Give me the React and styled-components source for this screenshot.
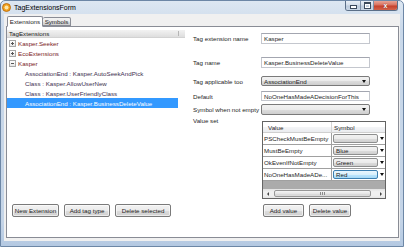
import React from 'react';
import styled, { createGlobalStyle, css } from 'styled-components';

const GlobalStyle = createGlobalStyle`
  html, body {
    margin: 0;
    padding: 0;
  }
  body {
    font-family: 'Liberation Sans', Arial, sans-serif;
    font-size: 6.2px;
    color: #1e1e1e;
  }
  * {
    box-sizing: border-box;
  }
`;

const Window = styled.div`
  width: 404px;
  height: 247px;
  display: flex;
  flex-direction: column;
  background: linear-gradient(180deg, #dde7f2 0%, #cad9ea 12%, #c4d4e7 90%, #b4c9e2 100%);
  border: 1px solid #6d87a6;
  border-radius: 5px 5px 0 0;
  overflow: hidden;
`;

const TitleBar = styled.div`
  height: 13px;
  flex-shrink: 0;
  display: flex;
  align-items: flex-start;
  padding-left: 1px;
  padding-right: 5px;
`;

const AppIcon = styled.svg`
  width: 9px;
  height: 9px;
  margin-top: 2px;
  flex-shrink: 0;
`;

const Title = styled.span`
  margin-left: 3px;
  font-size: 7px;
  line-height: 13px;
  color: #000;
`;

const CaptionGroup = styled.div`
  margin-left: auto;
  display: flex;
  height: 10px;
  border: 1px solid #5b6f88;
  border-top: none;
  border-radius: 0 0 3px 3px;
  overflow: hidden;
`;

const CaptionButton = styled.div`
  width: ${p => p.$w}px;
  height: 100%;
  display: flex;
  align-items: center;
  justify-content: center;
  background: ${p =>
    p.$close
      ? 'linear-gradient(180deg, #e8a597 0%, #d9715f 45%, #c6402b 55%, #d2634b 100%)'
      : 'linear-gradient(180deg, #e9eff6 0%, #d3dde9 45%, #bccbdc 55%, #c9d6e5 100%)'};
  & + & {
    border-left: 1px solid #7d8fa6;
  }
`;

const MinGlyph = styled.span`
  width: 5px;
  height: 2px;
  margin-top: 3px;
  background: #fff;
  border: 1px solid #3c4a5c;
  box-sizing: content-box;
`;

const MaxGlyph = styled.span`
  width: 5px;
  height: 4px;
  border: 1px solid #3c4a5c;
  border-top-width: 2px;
  box-shadow: inset 0 0 0 1px #fff;
  box-sizing: content-box;
`;

const CloseGlyph = styled.span`
  color: #fff;
  font-weight: bold;
  font-size: 7px;
  line-height: 7px;
  text-shadow: 0 0 1px #5a1a10;
`;

const Client = styled.div`
  flex: 1;
  margin: 0 3px 5px 3px;
  background: #f0f0f0;
  display: flex;
  flex-direction: column;
  padding: 2px 1px 3px 2px;
`;

const TabStrip = styled.div`
  height: 11px;
  display: flex;
  align-items: flex-end;
  margin-bottom: -1px;
  position: relative;
  z-index: 1;
`;

const Tab = styled.div`
  display: flex;
  align-items: center;
  justify-content: center;
  border: 1px solid #898c95;
  border-radius: 2px 2px 0 0;
  ${p =>
    p.$active
      ? css`
          width: 36px;
          height: 11px;
          margin-left: 1px;
          background: #fff;
          border-bottom-color: #fff;
        `
      : css`
          width: 28px;
          height: 9px;
          margin-bottom: 1px;
          border-left: none;
          background: linear-gradient(180deg, #f3f3f3 0%, #ebebeb 50%, #dddddd 51%, #cfcfcf 100%);
        `}
`;

const TabPage = styled.div`
  flex: 1;
  background: #fff;
  border: 1px solid #898c95;
  display: grid;
  grid-template-columns: 178px 1fr;
`;

const LeftPane = styled.div`
  display: flex;
  flex-direction: column;
`;

const Tree = styled.div`
  flex: 1;
  padding-top: 3px;
`;

const TreeHeader = styled.div`
  width: 178px;
  height: 8px;
  display: flex;
  align-items: center;
  padding-left: 2px;
  background: linear-gradient(180deg, #f2f2f2 0%, #dedede 100%);
  border-bottom: 1px solid #d2d2d2;
`;

const HeaderLabel = styled.span`
  width: 169px;
  color: #1a1a1a;
`;

const HeaderGrip = styled.span`
  width: 1px;
  height: 5px;
  background: #b5b5b5;
`;

const TreeRow = styled.div`
  width: 171px;
  height: 10px;
  display: flex;
  align-items: center;
  padding-left: ${p => (p.$child ? 18 : 2)}px;
  color: ${p => (p.$selected ? '#fff' : p.$child ? '#3e3050' : '#7a2226')};
  background: ${p => (p.$selected ? '#3399ff' : 'transparent')};
  white-space: nowrap;
`;

const Expander = styled.span`
  position: relative;
  width: 7px;
  height: 7px;
  margin-right: 2px;
  border: 1px solid #a8a8a8;
  background: linear-gradient(180deg, #ffffff 0%, #e6e6e6 100%);
  flex-shrink: 0;

  &:before {
    content: '';
    position: absolute;
    left: 1px;
    top: 2px;
    width: 3px;
    height: 1px;
    background: #555;
  }

  &:after {
    content: '';
    display: ${p => (p.$open ? 'none' : 'block')};
    position: absolute;
    left: 2px;
    top: 1px;
    width: 1px;
    height: 3px;
    background: #555;
  }
`;

const ButtonBar = styled.div`
  display: flex;
  gap: 5px;
  padding: 0 0 20px ${p => p.$indent}px;
`;

const PushButton = styled.button`
  width: ${p => p.$w}px;
  height: 13px;
  padding: 0;
  font-family: inherit;
  font-size: 6.2px;
  color: #1e1e1e;
  border: 1px solid #7a7a7a;
  border-radius: 2px;
  background: linear-gradient(180deg, #f2f2f2 0%, #ebebeb 50%, #dddddd 51%, #cfcfcf 100%);
  box-shadow: inset 0 0 0 1px rgba(255, 255, 255, 0.6);
`;

const RightPane = styled.div`
  display: flex;
  flex-direction: column;
  padding: 6px 0 0 8px;
`;

const Form = styled.div`
  flex: 1;
  display: flex;
  flex-direction: column;
`;

const FieldRow = styled.div`
  display: grid;
  grid-template-columns: 68px 109px;
  align-items: ${p => (p.$top ? 'start' : 'center')};
  margin-top: ${p => p.$gap || 0}px;
`;

const Label = styled.span`
  white-space: nowrap;
  ${p =>
    p.$top &&
    css`
      line-height: 7px;
      margin-top: -4px;
    `}
`;

const TextInput = styled.div`
  height: ${p => p.$h}px;
  display: flex;
  align-items: center;
  padding-left: 2px;
  background: #fff;
  border: 1px solid #c4c7ce;
  border-top-color: #a3a6b0;
  white-space: nowrap;
`;

const Combo = styled.div`
  height: ${p => p.$h}px;
  display: flex;
  align-items: center;
  padding: 0 3px 0 2px;
  border: 1px solid #7a7a7a;
  border-radius: 2px;
  background: linear-gradient(180deg, #f2f2f2 0%, #ebebeb 50%, #dddddd 51%, #cfcfcf 100%);
`;

const ComboText = styled.span`
  flex: 1;
`;

const Caret = styled.span`
  width: 0;
  height: 0;
  border-left: 2.5px solid transparent;
  border-right: 2.5px solid transparent;
  border-top: 3px solid #111;
`;

const SideCaret = styled.span`
  width: 0;
  height: 0;
  border-top: 2px solid transparent;
  border-bottom: 2px solid transparent;
  ${p => (p.$right ? 'border-left' : 'border-right')}: 2px solid #444;
`;

const DataGrid = styled.div`
  width: 124px;
  height: 78px;
  margin-left: 1px;
  border: 1px solid #646464;
  background: #ababab;
  display: flex;
  flex-direction: column;
  overflow: hidden;
`;

const GridRow = styled.div`
  display: flex;
  height: ${p => (p.$header ? 11 : 12)}px;
  flex-shrink: 0;
`;

const HeaderCell = styled.div`
  width: ${p => p.$w}px;
  flex-shrink: 0;
  display: flex;
  align-items: center;
  padding-left: ${p => p.$pad}px;
  background: linear-gradient(180deg, #ffffff 0%, #ffffff 45%, #f3f4f6 55%, #eaecef 100%);
  border-right: 1px solid #d5d5d5;
  border-bottom: 1px solid #cfcfcf;
`;

const ValueCell = styled.div`
  width: 69px;
  flex-shrink: 0;
  display: flex;
  align-items: center;
  padding-left: 1px;
  background: #fff;
  border-right: 1px solid #a0a0a0;
  border-bottom: 1px solid #a0a0a0;
  white-space: nowrap;
  overflow: hidden;
`;

const SymbolCell = styled.div`
  width: 60px;
  flex-shrink: 0;
  display: flex;
  align-items: center;
  padding: 1px 0 1px 1px;
  background: #fff;
  border-bottom: 1px solid #a0a0a0;
`;

const CellCombo = styled.div`
  width: 45px;
  height: 100%;
  display: flex;
  align-items: center;
  padding-left: 2px;
  border: 1px solid ${p => (p.$selected ? '#3c7fb1' : '#8e8f8f')};
  border-radius: 2px;
  background: ${p =>
    p.$selected
      ? 'linear-gradient(180deg, #eaf6fd 0%, #d9f0fc 50%, #bee6fd 51%, #a7d9f5 100%)'
      : 'linear-gradient(180deg, #f2f2f2 0%, #ebebeb 50%, #dddddd 51%, #cfcfcf 100%)'};
`;

const CellArrow = styled.span`
  width: 8px;
  display: flex;
  justify-content: center;
`;

const GrayBand = styled.div`
  flex: 1;
`;

const HScroll = styled.div`
  height: 9px;
  display: flex;
  align-items: center;
  background: linear-gradient(180deg, #e2e2e2 0%, #f0f0f0 30%, #f0f0f0 70%, #e6e6e6 100%);
`;

const ScrollArrow = styled.span`
  width: 9px;
  height: 100%;
  display: flex;
  align-items: center;
  justify-content: center;
`;

const Thumb = styled.span`
  width: 97px;
  height: 7px;
  margin-left: 2px;
  display: flex;
  align-items: center;
  justify-content: center;
  gap: 1px;
  border: 1px solid #979797;
  border-radius: 2px;
  background: linear-gradient(180deg, #f5f5f5 0%, #e6e6e6 50%, #d7d7d7 51%, #dcdcdc 100%);
`;

const GripLine = styled.span`
  width: 1px;
  height: 3px;
  background: #8a8a8a;
`;

const ScrollSpacer = styled.span`
  flex: 1;
`;

const treeItems = [
  { text: 'Kasper.Seeker', expander: 'closed' },
  { text: 'EcoExtensions', expander: 'closed' },
  { text: 'Kasper', expander: 'open' },
  { text: 'AssociationEnd : Kasper.AutoSeekAndPick', child: true },
  { text: 'Class : Kasper.AllowUserNew', child: true },
  { text: 'Class : Kasper.UserFriendlyClass', child: true },
  { text: 'AssociationEnd : Kasper.BusinessDeleteValue', child: true, selected: true },
];

const valueSet = [
  { value: 'PSCheckMustBeEmpty', symbol: '' },
  { value: 'MustBeEmpty', symbol: 'Blue' },
  { value: 'OkEvenIfNotEmpty', symbol: 'Green' },
  { value: 'NoOneHasMadeADe...', symbol: 'Red', selected: true },
];

const App = () => {
  return (
    <>
      <GlobalStyle />
      <Window>
        <TitleBar>
          <AppIcon viewBox="0 0 9 9">
            <circle cx="4.5" cy="4.5" r="4" fill="#f3a21d" stroke="#b2650a" strokeWidth="0.8" />
            <circle cx="4.5" cy="4.5" r="2" fill="#fde7a8" />
          </AppIcon>
          <Title>TagExtensionsForm</Title>
          <CaptionGroup>
            <CaptionButton $w={14}>
              <MinGlyph />
            </CaptionButton>
            <CaptionButton $w={13}>
              <MaxGlyph />
            </CaptionButton>
            <CaptionButton $w={24} $close>
              <CloseGlyph>x</CloseGlyph>
            </CaptionButton>
          </CaptionGroup>
        </TitleBar>

        <Client>
          <TabStrip>
            <Tab $active>Extensions</Tab>
            <Tab>Symbols</Tab>
          </TabStrip>

          <TabPage>
            <LeftPane>
              <Tree>
                <TreeHeader>
                  <HeaderLabel>TagExtensions</HeaderLabel>
                  <HeaderGrip />
                </TreeHeader>
                {treeItems.map((item, i) => (
                  <TreeRow key={i} $child={item.child} $selected={item.selected}>
                    {item.expander && <Expander $open={item.expander === 'open'} />}
                    {item.text}
                  </TreeRow>
                ))}
              </Tree>
              <ButtonBar $indent={5}>
                <PushButton $w={47}>New Extension</PushButton>
                <PushButton $w={46}>Add tag type</PushButton>
                <PushButton $w={56}>Delete selected</PushButton>
              </ButtonBar>
            </LeftPane>

            <RightPane>
              <Form>
                <FieldRow>
                  <Label>Tag extension name</Label>
                  <TextInput $h={11}>Kasper</TextInput>
                </FieldRow>
                <FieldRow $gap={13}>
                  <Label>Tag name</Label>
                  <TextInput $h={11}>Kasper.BusinessDeleteValue</TextInput>
                </FieldRow>
                <FieldRow $gap={8}>
                  <Label>Tag applicable too</Label>
                  <Combo $h={10}>
                    <ComboText>AssociationEnd</ComboText>
                    <Caret />
                  </Combo>
                </FieldRow>
                <FieldRow $gap={5}>
                  <Label>Default</Label>
                  <TextInput $h={10}>NoOneHasMadeADecisionForThis</TextInput>
                </FieldRow>
                <FieldRow $gap={3}>
                  <Label>Symbol when not empty</Label>
                  <Combo $h={11}>
                    <ComboText />
                    <Caret />
                  </Combo>
                </FieldRow>
                <FieldRow $gap={6} $top>
                  <Label $top>Value set</Label>
                  <DataGrid>
                    <GridRow $header>
                      <HeaderCell $w={69} $pad={5}>Value</HeaderCell>
                      <HeaderCell $w={60} $pad={2}>Symbol</HeaderCell>
                    </GridRow>
                    {valueSet.map((row, i) => (
                      <GridRow key={i}>
                        <ValueCell>{row.value}</ValueCell>
                        <SymbolCell>
                          <CellCombo $selected={row.selected}>{row.symbol}</CellCombo>
                          <CellArrow>
                            <Caret />
                          </CellArrow>
                        </SymbolCell>
                      </GridRow>
                    ))}
                    <GrayBand />
                    <HScroll>
                      <ScrollArrow>
                        <SideCaret />
                      </ScrollArrow>
                      <Thumb>
                        <GripLine />
                        <GripLine />
                        <GripLine />
                      </Thumb>
                      <ScrollSpacer />
                      <ScrollArrow>
                        <SideCaret $right />
                      </ScrollArrow>
                    </HScroll>
                  </DataGrid>
                </FieldRow>
              </Form>
              <ButtonBar $indent={70}>
                <PushButton $w={41}>Add value</PushButton>
                <PushButton $w={42}>Delete value</PushButton>
              </ButtonBar>
            </RightPane>
          </TabPage>
        </Client>
      </Window>
    </>
  );
};

export default App;
